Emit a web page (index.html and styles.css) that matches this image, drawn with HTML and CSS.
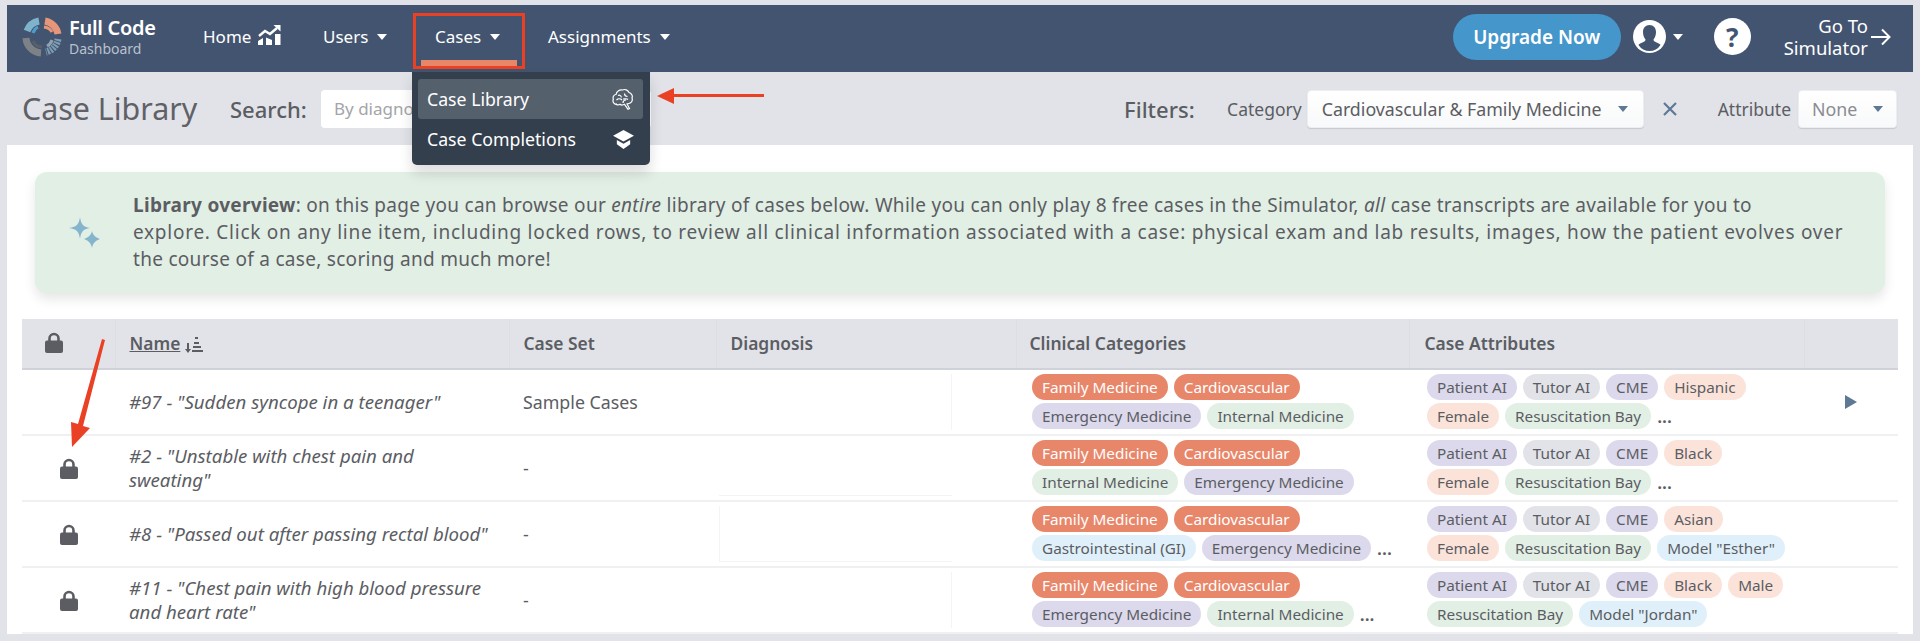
FILE: index.html
```html
<!DOCTYPE html>
<html lang="en">

<head>
    <meta charset="utf-8">
    <title>Case Library</title>
    <link rel="stylesheet" href="styles.css">
</head>

<body>
    <svg class="icon-defs" width="0" height="0">
        <symbol id="lock" viewBox="0 0 18 21">
            <path d="M4.5 10V6.5a4.5 4.5 0 0 1 9 0V10" fill="none" stroke="currentColor" stroke-width="2.6"/>
            <rect x="0" y="8.5" width="18" height="12.5" rx="2" fill="currentColor"/>
        </symbol>
    </svg>

    <div id="page">
        <nav id="navbar">
            <div id="logo">
                <svg width="40" height="40" viewBox="0 0 40 40" fill="none">
                    <path d="M5 14A16 16 0 0 1 17 4" stroke="#7fb3cc" stroke-width="7"/>
                    <path d="M23 4A16 16 0 0 1 36 17" stroke="#e8967a" stroke-width="7"/>
                    <path d="M36 22A16 16 0 0 1 24 35" stroke="#7d9db2" stroke-width="7" stroke-dasharray="2 1"/>
                    <path d="M19 36A16 16 0 0 1 4 21" stroke="#7d8287" stroke-width="7"/>
                    <path d="M11 16A10 10 0 0 1 16 10" stroke="#4f9ccb" stroke-width="3"/>
                    <path d="M22 10A11 11 0 0 1 30 15" stroke="#e8967a" stroke-width="3"/>
                    <path d="M11 24A10 10 0 0 0 20 30" stroke="#596068" stroke-width="3"/>
                    <path d="M25 29A10 10 0 0 0 30 23" stroke="#8fa3b2" stroke-width="3"/>
                </svg>
                <div id="logo-text">
                    <div id="logo-name">Full Code</div>
                    <div id="logo-sub">Dashboard</div>
                </div>
            </div>
            <div class="nav-item nav-home">Home
                <svg class="home-icon" width="23" height="20" viewBox="0 0 23 20" fill="#fff">
                    <path d="M1 11l6-5 5 3 7-6" fill="none" stroke="#fff" stroke-width="2.4"/>
                    <path d="M15.5 0H22.500V6.500z"/>
                    <path d="M0 16l5-3v7H0zM8 12.500l6 2.500V20H8zM17 9h5.500v11H17z"/>
                </svg>
            </div>
            <div class="nav-item nav-users">Users <span class="caret"></span></div>
            <div class="nav-item nav-cases">Cases <span class="caret"></span>
                <div id="cases-underline"></div>
                <div id="cases-box"></div>
            </div>
            <div class="nav-item nav-assignments">Assignments <span class="caret"></span></div>

            <div id="nav-right">
                <button id="upgrade-btn">Upgrade Now</button>
                <svg class="avatar" width="33" height="33" viewBox="0 0 33 33">
                    <circle cx="16.500" cy="16.500" r="16.500" fill="#fff"/>
                    <path d="M16.500 5c4 0 6.500 3 6.500 7 0 3-1 5.500-2.500 7.500 0 1.500 1 2 3 3 2 .8 3.500 1.500 4 2.500a13 13 0 0 1-22 0c.5-1 2-1.700 4-2.500 2-1 3-1.500 3-3C11 17.500 10 15 10 12c0-4 2.500-7 6.500-7z" fill="#435470"/>
                </svg>
                <span class="caret avatar-caret"></span>
                <div id="help-btn">?</div>
                <div id="simulator-link">
                    <div>Go To<br>Simulator</div>
                    <svg width="20" height="18" viewBox="0 0 20 18" fill="none" stroke="#fff" stroke-width="2">
                        <path d="M0 9h18M11 1.500L18.500 9 11 16.500"/>
                    </svg>
                </div>
            </div>
        </nav>

        <div id="dropdown">
            <div class="drop-item drop-active">Case Library
                <svg width="22" height="22" viewBox="0 0 22 22" fill="none" stroke="#fff" stroke-width="1.200">
                    <path d="M4 16.500c-2.500-.5-3.500-3-2.700-5C.5 9 2 6.500 4 6.500 4.500 3 8 1.200 10.500 2c2.500-1.200 5.500 0 6.500 2.500 2.500.5 4 3.500 3 5.500 1 2.500-.5 5-3 5.500l-2 .5 2.500 4.500-1.500.8-3.500-5c-1.500.8-3.500.8-4.500 0-1.500 1-3.500.8-4-.8z"/>
                    <path d="M6 7.500c1.500-.8 3 0 3.500 1.800M4.500 12c1.500-1.500 4-1.500 5.500 0M12.500 5.500c0 2 1 3 3 3M11 11c2 0 3.500-1 5 .5M11 15c0-2 1-3 3-3"/>
                </svg>
            </div>
            <div class="drop-item">Case Completions
                <svg width="21" height="19" viewBox="0 0 22 20" fill="#fff">
                    <path d="M11 0l11 6-11 6L0 6z"/>
                    <path d="M4 10.500l7 4 7-4V15l-7 5-7-5z"/>
                </svg>
            </div>
        </div>

        <div id="subbar">
            <div id="page-title">Case Library</div>
            <label id="search-label">Search:</label>
            <input id="search-input" type="text" placeholder="By diagnosis, case name...">
            <div id="filters">
                <span id="filters-label">Filters:</span>
                <span class="filter-label">Category</span>
                <div class="select select-category">Cardiovascular &amp; Family Medicine <span class="select-caret"></span></div>
                <svg class="clear-x" width="14" height="14" viewBox="0 0 14 14" stroke="#5f7896" stroke-width="2.200">
                    <path d="M1 1l12 12M13 1L1 13"/>
                </svg>
                <span class="filter-label filter-attribute">Attribute</span>
                <div class="select select-attribute">None <span class="select-caret"></span></div>
            </div>
        </div>

        <main id="content">
            <div id="notice">
                <svg class="sparkle" width="32" height="31" viewBox="0 0 32 31" fill="#85b5cd">
                    <path d="M11 0c1 7 3 10 10 11-7 1-9 4-10 11-1-7-3-10-11-11 8-1 10-4 11-11z"/>
                    <path d="M23 14c1 4 3 6 8 8-5 2-7 4-8 9-1-5-3-7-8-9 5-2 7-4 8-8z"/>
                </svg>
                <p><b>Library overview</b>: on this page you can browse our <i>entire</i> library of cases below. While you can only play 8 free cases in the Simulator, <i>all</i> case transcripts are available for you to<br><span class="notice-wide">explore. Click on any line item, including locked rows, to review all clinical information associated with a case: physical exam and lab results, images, how the patient evolves over</span><br>the course of a case, scoring and much more!</p>
            </div>

            <table id="case-table">
                <colgroup>
                    <col class="col-lock"><col class="col-name"><col class="col-set"><col class="col-diag"><col class="col-cat"><col class="col-attr"><col class="col-play">
                </colgroup>
                <thead>
                    <tr>
                        <th class="lock-head"><svg class="lock-icon" width="18" height="21"><use href="#lock"/></svg></th>
                        <th><u>Name</u>
                            <svg class="sort-icon" width="18" height="17" viewBox="0 0 18 17" fill="currentColor">
                                <path d="M2 7h2v6h2l-3 4-3-4h2zM10 1h3v2h-3zM9 6h5v2H9zM8 10h8v2H8zM7 14h11v2H7z"/>
                            </svg>
                        </th>
                        <th>Case Set</th>
                        <th>Diagnosis</th>
                        <th>Clinical Categories</th>
                        <th>Case Attributes</th>
                        <th></th>
                    </tr>
                </thead>
                <tbody>
                    <tr>
                        <td></td>
                        <td class="case-name">#97 - "Sudden syncope in a teenager"</td>
                        <td>Sample Cases</td>
                        <td class="diag-cell"><div class="diag-box box-right"></div></td>
                        <td class="cat-cell">
                            <div class="chip-row"><span class="chip orange">Family Medicine</span><span class="chip orange">Cardiovascular</span></div>
                            <div class="chip-row"><span class="chip purple">Emergency Medicine</span><span class="chip green">Internal Medicine</span></div>
                        </td>
                        <td class="attr-cell">
                            <div class="chip-row"><span class="chip purple">Patient AI</span><span class="chip gray">Tutor AI</span><span class="chip purple">CME</span><span class="chip peach">Hispanic</span></div>
                            <div class="chip-row"><span class="chip peach">Female</span><span class="chip green">Resuscitation Bay</span><span class="more">...</span></div>
                        </td>
                        <td class="play-cell"><span class="play"></span></td>
                    </tr>
                    <tr>
                        <td class="lock-cell"><svg class="lock-icon" width="18" height="21"><use href="#lock"/></svg></td>
                        <td class="case-name">#2 - "Unstable with chest pain and sweating"</td>
                        <td>-</td>
                        <td class="diag-cell"><div class="diag-box box-bottom"></div></td>
                        <td class="cat-cell">
                            <div class="chip-row"><span class="chip orange">Family Medicine</span><span class="chip orange">Cardiovascular</span></div>
                            <div class="chip-row"><span class="chip green">Internal Medicine</span><span class="chip purple">Emergency Medicine</span></div>
                        </td>
                        <td class="attr-cell">
                            <div class="chip-row"><span class="chip purple">Patient AI</span><span class="chip gray">Tutor AI</span><span class="chip purple">CME</span><span class="chip peach">Black</span></div>
                            <div class="chip-row"><span class="chip peach">Female</span><span class="chip green">Resuscitation Bay</span><span class="more">...</span></div>
                        </td>
                        <td></td>
                    </tr>
                    <tr>
                        <td class="lock-cell"><svg class="lock-icon" width="18" height="21"><use href="#lock"/></svg></td>
                        <td class="case-name">#8 - "Passed out after passing rectal blood"</td>
                        <td>-</td>
                        <td class="diag-cell"><div class="diag-box box-left"></div></td>
                        <td class="cat-cell">
                            <div class="chip-row"><span class="chip orange">Family Medicine</span><span class="chip orange">Cardiovascular</span></div>
                            <div class="chip-row"><span class="chip blue">Gastrointestinal (GI)</span><span class="chip purple">Emergency Medicine</span><span class="more">...</span></div>
                        </td>
                        <td class="attr-cell">
                            <div class="chip-row"><span class="chip purple">Patient AI</span><span class="chip gray">Tutor AI</span><span class="chip purple">CME</span><span class="chip peach">Asian</span></div>
                            <div class="chip-row"><span class="chip peach">Female</span><span class="chip green">Resuscitation Bay</span><span class="chip blue">Model "Esther"</span></div>
                        </td>
                        <td></td>
                    </tr>
                    <tr>
                        <td class="lock-cell"><svg class="lock-icon" width="18" height="21"><use href="#lock"/></svg></td>
                        <td class="case-name">#11 - "Chest pain with high blood pressure and heart rate"</td>
                        <td>-</td>
                        <td class="diag-cell"><div class="diag-box box-right"></div></td>
                        <td class="cat-cell">
                            <div class="chip-row"><span class="chip orange">Family Medicine</span><span class="chip orange">Cardiovascular</span></div>
                            <div class="chip-row"><span class="chip purple">Emergency Medicine</span><span class="chip green">Internal Medicine</span><span class="more">...</span></div>
                        </td>
                        <td class="attr-cell">
                            <div class="chip-row"><span class="chip purple">Patient AI</span><span class="chip gray">Tutor AI</span><span class="chip purple">CME</span><span class="chip peach">Black</span><span class="chip peach">Male</span></div>
                            <div class="chip-row"><span class="chip green">Resuscitation Bay</span><span class="chip blue">Model "Jordan"</span></div>
                        </td>
                        <td></td>
                    </tr>
                </tbody>
            </table>
        </main>

        <svg id="arrow-menu" class="red-arrow" width="107" height="20" viewBox="0 0 107 20" fill="#ea4125">
            <path d="M0 10L17 2v6h90v3H17v7z"/>
        </svg>
        <svg id="arrow-lock" class="red-arrow" width="40" height="110" viewBox="0 0 40 110" fill="#ea4125">
            <path d="M35 1l3 1-22 86 7 2-18 19-1-25 7 2z"/>
        </svg>
    </div>
</body>

</html>
```

FILE: styles.css
```css
* {
    box-sizing: border-box;
}

body {
    margin: 0;
    height: 641px;
    overflow: hidden;
    background-color: #e1e3e8;
    color: #5b5d63;
    font-family: "Noto Sans", "Open Sans", sans-serif;
    font-size: 16px;
}

.icon-defs {
    position: absolute;
}

#page {
    position: relative;
    padding: 5px 7px 0 7px;
}

/* top nav */
#navbar {
    display: flex;
    align-items: center;
    height: 67px;
    padding-bottom: 4px;
    background-color: #435470;
    color: #fff;
    font-size: 17px;
}

#logo {
    display: flex;
    align-items: center;
    width: 180px;
    padding-left: 15px;
    gap: 7px;
}

#logo-name {
    font-size: 20px;
    font-weight: 600;
    line-height: 24px;
    letter-spacing: -0.3px;
}

#logo-sub {
    font-size: 14px;
    line-height: 17px;
    color: #b9c1cd;
}

.nav-item {
    position: relative;
    display: flex;
    align-items: center;
    gap: 9px;
    height: 100%;
    padding-left: 16px;
    white-space: nowrap;
}

.nav-home {
    width: 120px;
}

.nav-users {
    width: 112px;
}

.nav-cases {
    width: 113px;
}

.caret {
    display: inline-block;
    width: 0;
    height: 0;
    border-left: 5.5px solid transparent;
    border-right: 5.5px solid transparent;
    border-top: 6px solid #fff;
}

.home-icon {
    margin-top: -3px;
    margin-left: -2px;
}

#cases-underline {
    position: absolute;
    left: 2px;
    top: 55px;
    width: 96px;
    height: 6px;
    background-color: #e8866a;
}

#cases-box {
    position: absolute;
    left: -6px;
    top: 8px;
    width: 112px;
    height: 56px;
    border: 3px solid #ea4125;
}

#nav-right {
    display: flex;
    align-items: center;
    margin-left: auto;
    padding-right: 22px;
}

#upgrade-btn {
    width: 168px;
    height: 46px;
    border: none;
    border-radius: 23px;
    background-color: #4596ca;
    color: #fff;
    font-family: inherit;
    font-size: 19px;
    font-weight: 600;
}

.avatar {
    margin-left: 12px;
}

.avatar-caret {
    margin-left: 7px;
}

#help-btn {
    display: flex;
    align-items: center;
    justify-content: center;
    width: 37px;
    height: 37px;
    margin-left: 31px;
    border-radius: 50%;
    background-color: #fff;
    color: #435470;
    font-size: 26px;
    font-weight: 700;
}

#simulator-link {
    display: flex;
    align-items: center;
    gap: 3px;
    margin-left: 33px;
    font-size: 18.500px;
    line-height: 22px;
    text-align: right;
}

/* cases dropdown */
#dropdown {
    position: absolute;
    z-index: 3;
    left: 412px;
    top: 72px;
    width: 238px;
    height: 93px;
    padding: 7px 7px 0 6px;
    border-radius: 0 0 5px 5px;
    background-color: #343f4d;
    box-shadow: 0 8px 14px rgba(0, 0, 0, 0.14);
    color: #fff;
    font-size: 17.700px;
}

.drop-item {
    display: flex;
    align-items: center;
    justify-content: space-between;
    height: 40px;
    padding: 0 9px 0 9px;
    border-radius: 3px;
}

.drop-active {
    background-color: #55606d;
}

/* search and filter row */
#subbar {
    display: flex;
    align-items: center;
    height: 73px;
    padding: 0 16px 0 15px;
}

#page-title {
    width: 208px;
    font-size: 30.400px;
    color: #5f6167;
}

#search-label {
    width: 91px;
    font-size: 22px;
    font-weight: 500;
}

#search-input {
    width: 330px;
    height: 38px;
    padding: 0 13px;
    border: none;
    border-radius: 4px;
    background-color: #fff;
    font-family: inherit;
    font-size: 17px;
}

#search-input::placeholder {
    color: #a3a5a9;
}

#filters {
    display: flex;
    align-items: center;
    margin-left: auto;
}

#filters-label {
    width: 103px;
    font-size: 22px;
    font-weight: 500;
}

.filter-label {
    margin-right: 5px;
    font-size: 17.500px;
}

.filter-attribute {
    margin-right: 7px;
}

.select {
    display: flex;
    align-items: center;
    justify-content: space-between;
    height: 38px;
    padding: 0 15px 0 14px;
    border: 1px solid #eceef1;
    border-radius: 4px;
    background: linear-gradient(#fff, #f8f9fa);
    box-shadow: 0 1px 1px rgba(0, 0, 0, 0.12);
    font-size: 17.800px;
    white-space: nowrap;
}

.select-category {
    width: 337px;
}

.select-attribute {
    width: 99px;
    padding: 0 13px;
    color: #8a8c91;
}

.select-caret {
    width: 0;
    height: 0;
    border-left: 5px solid transparent;
    border-right: 5px solid transparent;
    border-top: 6px solid #5f7896;
}

.clear-x {
    margin: 0 41px 0 19px;
}

/* main card */
#content {
    height: 489px;
    padding: 27px 15px 0;
    background-color: #fff;
}

#notice {
    display: flex;
    align-items: center;
    height: 121px;
    margin: 0 13px 26px 13px;
    padding: 0 30px 0 34px;
    border-radius: 12px;
    background-color: #e2efe5;
    box-shadow: 0 6px 12px rgba(0, 0, 0, 0.1);
    font-size: 19px;
    letter-spacing: 0.290px;
    line-height: 27px;
    white-space: nowrap;
}

.notice-wide {
    letter-spacing: 0.740px;
}

.sparkle {
    flex: none;
    margin-right: 32px;
}

#notice p {
    margin: 0;
}

#case-table {
    width: 1876px;
    table-layout: fixed;
    border-collapse: collapse;
    font-size: 17.800px;
}

.col-lock { width: 93px; }
.col-name { width: 394px; }
.col-set { width: 207px; }
.col-diag { width: 300px; }
.col-cat { width: 393px; }
.col-attr { width: 395px; }
.col-play { width: 94px; }

#case-table th {
    height: 50px;
    padding: 0 0 2px 14px;
    border-left: 1px solid #dcdee3;
    border-bottom: 2px solid #cfd2d8;
    background-color: #e1e3e8;
    font-size: 17.400px;
    font-weight: 600;
    text-align: left;
}

#case-table th.lock-head {
    padding-left: 23px;
    border-left: none;
}

#case-table th:nth-child(5) {
    padding-left: 13px;
}

#case-table th:nth-child(6) {
    padding-left: 15px;
}

.sort-icon {
    vertical-align: -3px;
}

.lock-icon {
    display: block;
}

.lock-cell .lock-icon {
    margin-left: 38px;
}

#case-table td {
    height: 66px;
    padding: 0 0 0 14px;
    border-bottom: 2px solid #eff0f2;
    vertical-align: middle;
}

#case-table td.lock-cell {
    padding: 0;
}

#case-table td.case-name {
    padding-right: 18px;
    font-size: 18.650px;
    font-style: italic;
    line-height: 24px;
}

#case-table td.diag-cell {
    padding: 0 0 0 3px;
}

#case-table td.cat-cell {
    padding: 0 0 2px 16px;
}

#case-table td.attr-cell {
    padding: 0 0 2px 18px;
}

.diag-box {
    width: 233px;
    height: 56px;
    border: 0 solid #f3f4f5;
}

.box-right {
    border-right-width: 1px;
}

.box-bottom {
    border-bottom-width: 1px;
}

.box-left {
    border-left-width: 1px;
    border-bottom-width: 1px;
}

.chip-row {
    display: flex;
    align-items: center;
    gap: 6px;
    height: 29px;
}

.chip {
    display: inline-block;
    height: 26px;
    padding: 0 10px;
    border-radius: 13px;
    font-size: 15.300px;
    line-height: 26px;
    white-space: nowrap;
}

.orange {
    background-color: #e8866a;
    color: #fff;
}

.purple {
    background-color: #dcd9ec;
}

.gray {
    background-color: #e1e3e8;
}

.peach {
    background-color: #fbe3da;
}

.green {
    background-color: #e2efe5;
}

.blue {
    background-color: #e0f0fa;
}

.more {
    font-weight: 600;
}

#case-table td.play-cell {
    padding-left: 41px;
}

.play {
    display: block;
    width: 0;
    height: 0;
    border-top: 7px solid transparent;
    border-bottom: 7px solid transparent;
    border-left: 12px solid #5f7896;
}

/* annotation arrows drawn over the screenshot */
.red-arrow {
    position: absolute;
    z-index: 4;
}

#arrow-menu {
    left: 657px;
    top: 86px;
}

#arrow-lock {
    left: 67px;
    top: 338px;
}
```
